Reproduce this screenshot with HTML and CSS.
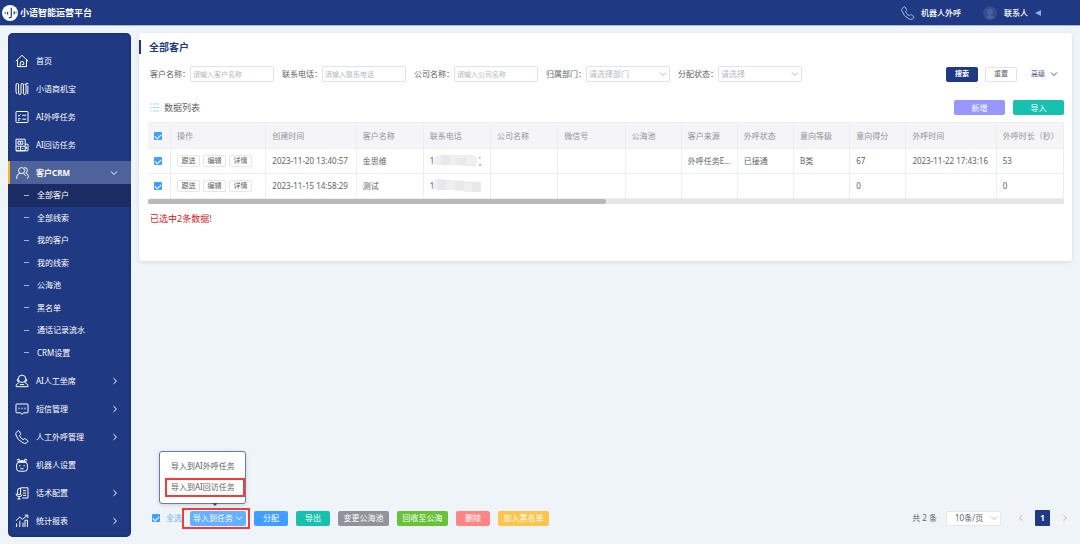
FILE: index.html
```html
<!DOCTYPE html>
<html lang="zh-CN">
<head>
    <meta charset="UTF-8">
    <meta name="viewport" content="width=device-width, initial-scale=1.0">
    <title>小语智能运营平台</title>
    <link rel="stylesheet" href="styles.css">
</head>
<body>
    <svg class="sprite" aria-hidden="true">
        <symbol id="arrow-right" viewBox="0 0 6 8"><path d="M1.5 1.2L4.5 4L1.5 6.8"/></symbol>
        <symbol id="arrow-left" viewBox="0 0 6 8"><path d="M4.5 1.2L1.5 4L4.5 6.8"/></symbol>
        <symbol id="arrow-down" viewBox="0 0 8 6"><path d="M1 1.5L4 4.5L7 1.5"/></symbol>
        <symbol id="phone" viewBox="0 0 14 14"><path d="M1.2 2.7L3 .8Q3.6.4 4.1 1L5.6 3.6Q5.9 4.2 5.3 4.8L4.5 5.5Q5.2 7.8 8.1 9.7L9.1 8.9Q9.7 8.4 10.3 8.8L12.7 10.6Q13.4 11.2 12.8 11.8L11.2 13.1Q9.8 13.9 7.8 12.8Q2.4 10.2.9 4.9Q.6 3.5 1.2 2.7Z"/></symbol>
    </svg>

    <header class="topbar">
        <div class="brand">
            <svg class="logo" viewBox="0 0 16 16" aria-hidden="true">
                <circle cx="8" cy="8" r="8" fill="#fff"/>
                <path d="M3.2 7.2v1.6M9.3 2.8v8.4q0 1.8-2.5 1.3M12.2 6.2v3.2M5.6 7v2.4" fill="none" stroke="#1f3983" stroke-width="1.2"/>
                <circle cx="14" cy="7.7" r=".6" fill="#1f3983"/>
            </svg>
            <span>小语智能运营平台</span>
        </div>
        <div class="account">
            <a class="robot-call" href="#"><svg class="icon" aria-hidden="true"><use href="#phone"/></svg>机器人外呼</a>
            <a class="contact" href="#">
                <svg class="avatar" viewBox="0 0 14 14" aria-hidden="true">
                    <circle cx="7" cy="7" r="7" fill="#344c90"/>
                    <circle cx="7" cy="6" r="3" fill="#4a609f"/>
                    <path d="M2.5 11.5Q7 7 11.5 11.5Q7 15 2.5 11.5Z" fill="#4a609f"/>
                </svg>
                联系人
                <svg class="triangle" viewBox="0 0 6 6" aria-hidden="true"><path d="M0 3L6 0V6Z"/></svg>
            </a>
        </div>
    </header>

    <div class="layout">
        <nav class="sidebar">
            <a class="menu-item" href="#">
                <svg class="icon" viewBox="0 0 14 14" aria-hidden="true"><path d="M.8 7.2L7 1.3L13.2 7.2M2.5 5.8V12.6H11.5V5.8M5.2 12.4V9.2Q5.2 7.4 7 7.4T8.8 9.2V10.4H6.8"/></svg>
                <span>首页</span>
            </a>
            <a class="menu-item" href="#">
                <svg class="icon" viewBox="0 0 14 14" aria-hidden="true"><path d="M1 10V3Q1 1.4 2.3 1.4T3.6 3V11Q3.6 12.6 4.8 12.6T6 11V3Q6 1.4 7.2 1.4T8.4 3V11Q8.4 12.6 9.7 12.6T11 11V2M12.8 12V3.5M9.7 3L11 1.3L13.3 1.6M1 10L2 12"/></svg>
                <span>小语商机宝</span>
            </a>
            <a class="menu-item" href="#">
                <svg class="icon" viewBox="0 0 14 14" aria-hidden="true"><rect x="1" y="1.5" width="12" height="11" rx=".6"/><path d="M3 5.3L4 6.2L5.5 4.4M7.3 5.3H11.2M3 8.8H5.6M3 10.3H4.5M7.3 9.2H11.2"/></svg>
                <span>AI外呼任务</span>
            </a>
            <a class="menu-item" href="#">
                <svg class="icon" viewBox="0 0 14 14" aria-hidden="true"><path d="M1 1.2H10.2V12.8H1ZM10.2 6.2H13V12.8H1M1 8.2H10M5.6 8.2V12.8M3 3.2H7.8V6.2H3ZM5.4 3.2V6M2.8 10.4H4M7.2 10.4H8.4M11.6 8.6V11"/></svg>
                <span>AI回访任务</span>
            </a>
            <a class="menu-item open" href="#">
                <svg class="icon" viewBox="0 0 14 14" aria-hidden="true"><circle cx="6.6" cy="4.6" r="3"/><path d="M1.7 12.8V11Q1.8 8.3 5 7.2M8.4 7.3Q10 8 10.5 9.8M9.3 1.6Q12.3 1.4 12.4 4.2Q12.3 6.2 10.8 6.8Q13.2 7.8 13.4 10.8L12.3 12.6"/></svg>
                <span>客户CRM</span>
                <svg class="arrow-down" aria-hidden="true"><use href="#arrow-down"/></svg>
            </a>
            <div class="submenu">
                <a class="current" href="#">全部客户</a>
                <a href="#">全部线索</a>
                <a href="#">我的客户</a>
                <a href="#">我的线索</a>
                <a href="#">公海池</a>
                <a href="#">黑名单</a>
                <a href="#">通话记录流水</a>
                <a href="#">CRM设置</a>
            </div>
            <a class="menu-item" href="#">
                <svg class="icon" viewBox="0 0 14 14" aria-hidden="true"><circle cx="7" cy="4.8" r="3.7"/><path d="M4.5 8L1.2 10.8V12.7H12.8V10.8L9.5 8M3.3 5.2H2.4V7.2H4M10.7 5.2H11.6V7.2L9.6 8M4.8 10.6H9.2"/></svg>
                <span>AI人工坐席</span>
                <svg class="arrow-right" aria-hidden="true"><use href="#arrow-right"/></svg>
            </a>
            <a class="menu-item" href="#">
                <svg class="icon" viewBox="0 0 14 14" aria-hidden="true"><path d="M1.600 2H12.4Q13 2 13 2.6V10.2Q13 10.8 12.4 10.8H8.4L7 12.4L5.6 10.8H1.6Q1 10.8 1 10.2V2.6Q1 2 1.6 2ZM4 5.6V7.2M7 5.6V7.2M10 5.6V7.2"/></svg>
                <span>短信管理</span>
                <svg class="arrow-right" aria-hidden="true"><use href="#arrow-right"/></svg>
            </a>
            <a class="menu-item" href="#">
                <svg class="icon" aria-hidden="true"><use href="#phone"/></svg>
                <span>人工外呼管理</span>
                <svg class="arrow-right" aria-hidden="true"><use href="#arrow-right"/></svg>
            </a>
            <a class="menu-item" href="#">
                <svg class="icon" viewBox="0 0 14 14" aria-hidden="true"><rect x="1.6" y="4.4" width="10.8" height="8.8" rx="2.6"/><path d="M1.8 2L4 1L4.6 4M12.2 2L10 1L9.4 4M5.5 2.5H8.5M2.4 3.4H11.6M4.9 7V8.4M9.1 7V8.4M5.4 10.4Q7 11.4 8.6 10.4"/></svg>
                <span>机器人设置</span>
            </a>
            <a class="menu-item" href="#">
                <svg class="icon" viewBox="0 0 14 14" aria-hidden="true"><path d="M6 1.8H13V12H7.2M8 4.6H11.2M8 7H11.2M8 9.4H11.2M5.6 2V8.4H2.6V4.2Q2.6 2 5.6 2M1 7.4Q1 10.4 4 10.6T6.8 8.5M4 10.6V13M2.4 13H5.6"/></svg>
                <span>话术配置</span>
                <svg class="arrow-right" aria-hidden="true"><use href="#arrow-right"/></svg>
            </a>
            <a class="menu-item" href="#">
                <svg class="icon" viewBox="0 0 14 14" aria-hidden="true"><path d="M.8 6.8L4.8 3L7.4 5.4L12.5 1.3M9.8 1.2H12.8V4M1.6 9.4V13M4.8 6.8V13M8 8.6V13M10 6.2V13M12.4 6.2V13M10 6.2H12.4"/></svg>
                <span>统计报表</span>
                <svg class="arrow-right" aria-hidden="true"><use href="#arrow-right"/></svg>
            </a>
        </nav>

        <main class="content">
            <section class="panel">
                <h1>全部客户</h1>
                <form class="filters">
                    <div class="field">
                        <label for="customer-name">客户名称：</label>
                        <input type="text" id="customer-name" placeholder="请输入客户名称">
                    </div>
                    <div class="field">
                        <label for="customer-phone">联系电话：</label>
                        <input type="text" id="customer-phone" placeholder="请输入联系电话">
                    </div>
                    <div class="field">
                        <label for="company-name">公司名称：</label>
                        <input type="text" id="company-name" placeholder="请输入公司名称">
                    </div>
                    <div class="field">
                        <label for="department">归属部门：</label>
                        <div class="select">
                            <select id="department"><option>请选择部门</option></select>
                            <svg class="arrow-down" aria-hidden="true"><use href="#arrow-down"/></svg>
                        </div>
                    </div>
                    <div class="field">
                        <label for="assign-status">分配状态：</label>
                        <div class="select">
                            <select id="assign-status"><option>请选择</option></select>
                            <svg class="arrow-down" aria-hidden="true"><use href="#arrow-down"/></svg>
                        </div>
                    </div>
                    <div class="filter-buttons">
                        <button type="submit" class="search">搜索</button>
                        <button type="reset" class="reset">重置</button>
                        <button type="button" class="advanced">高级<svg class="arrow-down" aria-hidden="true"><use href="#arrow-down"/></svg></button>
                    </div>
                </form>

                <div class="list-head">
                    <svg class="list-icon" viewBox="0 0 9 9" aria-hidden="true"><path d="M0 1H1.5M3 1H9M0 4.5H1.5M3 4.5H9M0 8H1.5M3 8H9"/></svg>
                    <h2>数据列表</h2>
                    <button type="button" class="btn btn-wide purple">新增</button>
                    <button type="button" class="btn btn-wide teal">导入</button>
                </div>

                <div class="table-wrap">
                    <table>
                        <colgroup>
                            <col class="w-check"><col class="w-actions"><col class="w-time"><col class="w-mid"><col class="w-mid">
                            <col class="w-mid"><col class="w-mid"><col class="w-small"><col class="w-small"><col class="w-small">
                            <col class="w-small"><col class="w-small"><col class="w-time"><col class="w-mid">
                        </colgroup>
                        <thead>
                            <tr>
                                <th><input type="checkbox" aria-label="全选" checked></th>
                                <th>操作</th>
                                <th>创建时间</th>
                                <th>客户名称</th>
                                <th>联系电话</th>
                                <th>公司名称</th>
                                <th>微信号</th>
                                <th>公海池</th>
                                <th>客户来源</th>
                                <th>外呼状态</th>
                                <th>意向等级</th>
                                <th>意向得分</th>
                                <th>外呼时间</th>
                                <th>外呼时长（秒）</th>
                            </tr>
                        </thead>
                        <tbody>
                            <tr>
                                <td><input type="checkbox" aria-label="金思维" checked></td>
                                <td><div class="actions"><button type="button">跟进</button><button type="button">编辑</button><button type="button">详情</button></div></td>
                                <td>2023-11-20 13:40:57</td>
                                <td>金思维</td>
                                <td><div class="phone-cell">1.<svg class="mask" viewBox="0 0 48 14" aria-hidden="true">
                                    <path d="M1 6Q2 1 8 1H34Q42 0 44 4Q46 9 42 13L24 11H6Q1 11 1 6Z" fill="#efefef"/>
                                    <path d="M8 1H16V11H8ZM24 4H33V12L24 11Z" fill="#e9e9ea"/>
                                    <path d="M46 4H47.5M46 11H48" stroke="#777" stroke-width="1"/>
                                </svg></div></td>
                                <td></td>
                                <td></td>
                                <td></td>
                                <td>外呼任务E...</td>
                                <td>已接通</td>
                                <td>B类</td>
                                <td>67</td>
                                <td>2023-11-22 17:43:16</td>
                                <td>53</td>
                            </tr>
                            <tr>
                                <td><input type="checkbox" aria-label="测试" checked></td>
                                <td><div class="actions"><button type="button">跟进</button><button type="button">编辑</button><button type="button">详情</button></div></td>
                                <td>2023-11-15 14:58:29</td>
                                <td>测试</td>
                                <td><div class="phone-cell">1.<svg class="mask" viewBox="0 0 48 14" aria-hidden="true">
                                    <path d="M0 5Q1 0 6 0L20 1L48 3V13L34 13L20 11H5Q0 11 0 5Z" fill="#efefef"/>
                                    <path d="M5 1H13V11H5ZM22 2L31 2V12L22 11ZM39 3H48V13H39Z" fill="#e8e8e9"/>
                                </svg></div></td>
                                <td></td>
                                <td></td>
                                <td></td>
                                <td></td>
                                <td></td>
                                <td></td>
                                <td>0</td>
                                <td></td>
                                <td>0</td>
                            </tr>
                        </tbody>
                    </table>
                    <div class="scrollbar"><div class="thumb"></div></div>
                </div>
                <p class="selected-tip">已选中2条数据!</p>
            </section>

            <footer class="bottom-bar">
                <label class="check-all"><input type="checkbox" checked>全选</label>
                <div class="dropdown">
                    <button type="button" class="btn light-blue">导入到任务<svg class="arrow-down" aria-hidden="true"><use href="#arrow-down"/></svg></button>
                    <div class="popup">
                        <button type="button">导入到AI外呼任务</button>
                        <button type="button" class="marked">导入到AI回访任务</button>
                    </div>
                </div>
                <button type="button" class="btn blue">分配</button>
                <button type="button" class="btn teal">导出</button>
                <button type="button" class="btn btn-wide gray">变更公海池</button>
                <button type="button" class="btn btn-wide green">回收至公海</button>
                <button type="button" class="btn red">删除</button>
                <button type="button" class="btn btn-wide yellow">加入黑名单</button>

                <div class="pagination">
                    <span class="total">共 2 条</span>
                    <div class="select">
                        <select aria-label="每页条数"><option>10条/页</option></select>
                        <svg class="arrow-down" aria-hidden="true"><use href="#arrow-down"/></svg>
                    </div>
                    <button type="button" aria-label="上一页"><svg class="arrow-right" aria-hidden="true"><use href="#arrow-left"/></svg></button>
                    <button type="button" class="page-current">1</button>
                    <button type="button" aria-label="下一页"><svg class="arrow-right" aria-hidden="true"><use href="#arrow-right"/></svg></button>
                </div>
            </footer>
        </main>
    </div>
</body>
</html>
```

FILE: styles.css
```css
* {
    box-sizing: border-box;
}

body {
    display: flex;
    flex-direction: column;
    min-height: 100vh;
    margin: 0;
    background-color: #eff4f8;
    color: #606266;
    font-family: "Noto Sans", "Noto Sans CJK SC", sans-serif;
    font-size: 8px;
    line-height: 12px;
}

a {
    color: inherit;
    text-decoration: none;
}

button, input, select {
    margin: 0;
    padding: 0;
    font-family: inherit;
    font-size: 8px;
    line-height: 12px;
}

button {
    cursor: pointer;
}

svg {
    flex-shrink: 0;
    fill: none;
    stroke: currentColor;
}

.sprite {
    position: absolute;
    width: 0;
    height: 0;
}

.icon {
    width: 14px;
    height: 14px;
}

.arrow-right {
    width: 6px;
    height: 8px;
}

.arrow-down {
    width: 8px;
    height: 6px;
}

/* Top bar */
.topbar {
    display: flex;
    justify-content: space-between;
    align-items: center;
    height: 26px;
    padding: 0 39px 0 2px;
    background-color: #1f3983;
    border-bottom: 1px solid #a9b6d8;
    color: #fff;
}

.brand {
    display: flex;
    align-items: center;
    gap: 2px;
    font-size: 9px;
    font-weight: bold;
}

.logo {
    width: 16px;
    height: 16px;
    stroke: none;
}

.account, .robot-call, .contact {
    display: flex;
    align-items: center;
}

.account {
    gap: 22px;
    font-weight: 500;
}

.robot-call {
    gap: 6px;
}

.robot-call .icon {
    color: #a9bdf2;
}

.contact {
    gap: 7px;
}

.avatar {
    width: 14px;
    height: 14px;
    stroke: none;
}

.triangle {
    width: 6px;
    height: 6px;
    fill: #8ea9ee;
    stroke: none;
}

.layout {
    display: flex;
    flex: 1;
    gap: 8px;
    padding: 7px 8px;
}

/* Sidebar */
.sidebar {
    flex: 0 0 123px;
    padding: 11px 0 4px;
    border-radius: 5px;
    background-color: #1f3983;
    box-shadow: inset 0 0 3px #142a66;
    color: #fff;
}

.menu-item {
    display: flex;
    align-items: center;
    gap: 7px;
    height: 23px;
    margin-top: 5px;
    padding: 0 13px 0 5px;
    border-left: 2px solid transparent;
}

.menu-item span {
    flex: 1;
}

.menu-item.open {
    background-color: #4e629b;
    border-left-color: #fdb813;
    font-weight: bold;
}

.submenu {
    display: grid;
    grid-auto-rows: 1fr;
    height: 180px;
}

.submenu a {
    display: flex;
    align-items: center;
    gap: 8px;
    padding-left: 16px;
}

.submenu a::before {
    content: "";
    width: 5px;
    height: 1px;
    background-color: #a5b1d1;
}

.submenu .current {
    background-color: #1b2c64;
}

/* Main panel */
.content {
    display: flex;
    flex: 1;
    flex-direction: column;
    min-width: 0;
}

.panel {
    padding: 7px 0 36px;
    border-radius: 3px;
    background-color: #fff;
    box-shadow: 0 1px 4px rgba(0, 0, 0, 0.1);
}

h1 {
    margin: 0;
    padding-left: 8px;
    border-left: 2px solid #1f3983;
    color: #1f3983;
    font-size: 10px;
    line-height: 14px;
}

.filters {
    display: flex;
    gap: 8px;
    margin-top: 12px;
    padding: 0 12px 0 11px;
}

.field {
    display: flex;
    align-items: center;
}

.field label {
    white-space: nowrap;
}

.field input, select {
    width: 84px;
    height: 16px;
    padding: 0 2px;
    border: 1px solid #dfe3ea;
    border-radius: 2px;
    background-color: #fff;
    font-size: 7px;
}

input::placeholder {
    color: #b4b8c2;
}

.select {
    display: grid;
    align-items: center;
    color: #b4b8c2;
}

.select select, .select svg {
    grid-area: 1 / 1;
}

select {
    appearance: none;
    color: #b4b8c2;
}

.field select {
    font-size: 8px;
}

.select svg {
    justify-self: end;
    margin-right: 3px;
    pointer-events: none;
}

.filter-buttons {
    display: flex;
    align-items: center;
    gap: 7px;
    margin-left: auto;
}

.filter-buttons button {
    width: 32px;
    height: 15px;
    border: 1px solid #dfe3ea;
    border-radius: 2px;
    background-color: #fff;
    color: #606266;
    font-size: 7px;
}

.filter-buttons .search {
    border-color: #1f3983;
    background-color: #1f3983;
    color: #fff;
    font-weight: bold;
}

.filter-buttons .advanced {
    display: flex;
    justify-content: flex-end;
    align-items: center;
    gap: 5px;
    width: 36px;
    padding-right: 2px;
    border: none;
    color: #45568c;
}

.list-head {
    display: flex;
    align-items: center;
    gap: 8px;
    margin-top: 18px;
    padding: 0 8px 0 11px;
}

.list-icon {
    width: 9px;
    height: 9px;
    margin-right: -3px;
    stroke: #a9d3fb;
}

h2 {
    flex: 1;
    margin: 0;
    font-size: 9px;
    font-weight: normal;
}

.btn {
    display: flex;
    justify-content: center;
    align-items: center;
    min-width: 34px;
    height: 15px;
    padding: 0 4px;
    border: none;
    border-radius: 2px;
    color: #fff;
    white-space: nowrap;
}

.btn-wide {
    min-width: 51px;
}

.purple { background-color: #9896ff; }
.teal { background-color: #18c1ae; }
.blue { background-color: #409eff; }
.light-blue { background-color: #66b1ff; }
.gray { background-color: #909399; }
.green { background-color: #67c23a; }
.red { background-color: #ff8585; }
.yellow { background-color: #ffc44d; }

/* Table */
.table-wrap {
    margin: 7px 8px 0 9px;
}

table {
    width: 100%;
    table-layout: fixed;
    border-collapse: separate;
    border-spacing: 0;
    border-top: 1px solid #ebeef5;
}

.w-check { width: 23px; }
.w-actions { width: 95px; }
.w-time { width: 90px; }
.w-mid { width: 67px; }
.w-small { width: 56px; }

th, td {
    height: 25px;
    padding: 0 0 0 6px;
    border-right: 1px solid #ebeef5;
    border-bottom: 1px solid #ebeef5;
    text-align: left;
    font-weight: normal;
    white-space: nowrap;
}

th {
    height: 26px;
    background-color: #f5f5f8;
    color: #909399;
}

input[type="checkbox"] {
    display: grid;
    place-items: center;
    appearance: none;
    width: 8px;
    height: 8px;
    border-radius: 1px;
    background-color: #409eff;
}

input[type="checkbox"]:checked::before {
    content: "";
    width: 5px;
    height: 3px;
    border-left: 1px solid #fff;
    border-bottom: 1px solid #fff;
    transform: rotate(-45deg);
}

.actions {
    display: flex;
    gap: 3px;
}

.actions button {
    width: 23px;
    height: 12px;
    border: 1px solid #e3e6ec;
    border-radius: 2px;
    background-color: #fff;
    color: #606266;
    font-size: 7px;
    line-height: 10px;
}

.phone-cell {
    display: flex;
    align-items: center;
}

.mask {
    width: 48px;
    height: 14px;
    margin-left: -4px;
    stroke: none;
}

.scrollbar {
    height: 5px;
    border-radius: 2px;
    background-color: #e6e6e6;
}

.thumb {
    width: 50%;
    height: 100%;
    border-radius: 2px;
    background-color: #b9b9b9;
}

.selected-tip {
    margin: 9px 0 0 11px;
    color: #d8201f;
    font-size: 9px;
}

/* Bottom bar */
.bottom-bar {
    display: flex;
    align-items: center;
    gap: 8px;
    margin-top: auto;
    padding: 0 0 11px 13px;
}

.check-all {
    display: flex;
    align-items: center;
    gap: 6px;
    color: #66b1ff;
}

.dropdown {
    position: relative;
}

.dropdown .btn {
    gap: 2px;
    padding: 0 3px;
}

/* Red frame round the open menu button */
.dropdown::after {
    content: "";
    position: absolute;
    inset: -3px -4px -3px -8px;
    border: 2px solid #f23c3c;
    pointer-events: none;
}

.popup {
    position: absolute;
    bottom: 22px;
    left: -31px;
    display: flex;
    flex-direction: column;
    gap: 1px;
    width: 87px;
    padding: 4px 0 6px 5px;
    border: 1px solid #6c78aa;
    border-radius: 3px;
    background-color: #fff;
    box-shadow: 0 1px 4px rgba(0, 0, 0, 0.15);
}

.popup::after {
    content: "";
    position: absolute;
    top: 100%;
    left: 52px;
    border: 3px solid transparent;
    border-top-color: #3a4c8a;
}

.popup button {
    height: 21px;
    padding-left: 6px;
    border: none;
    background-color: transparent;
    color: #606266;
    text-align: left;
    white-space: nowrap;
}

.popup .marked {
    height: 19px;
    padding-left: 4px;
    border: 2px solid #f23c3c;
}

.pagination {
    display: flex;
    align-items: center;
    gap: 7px;
    margin-left: auto;
}

.pagination .select {
    margin: 0 5px 0 2px;
}

.pagination select {
    width: 55px;
    height: 15px;
    padding-left: 8px;
    border-color: #e4e7ed;
    color: #606266;
    font-size: 8px;
}

.pagination button {
    display: flex;
    justify-content: center;
    align-items: center;
    width: 15px;
    height: 16px;
    border: none;
    border-radius: 1px;
    background-color: #f1f3f6;
    color: #b4b8c2;
}

.pagination .page-current {
    background-color: #1f3983;
    color: #fff;
    font-weight: bold;
}
```
